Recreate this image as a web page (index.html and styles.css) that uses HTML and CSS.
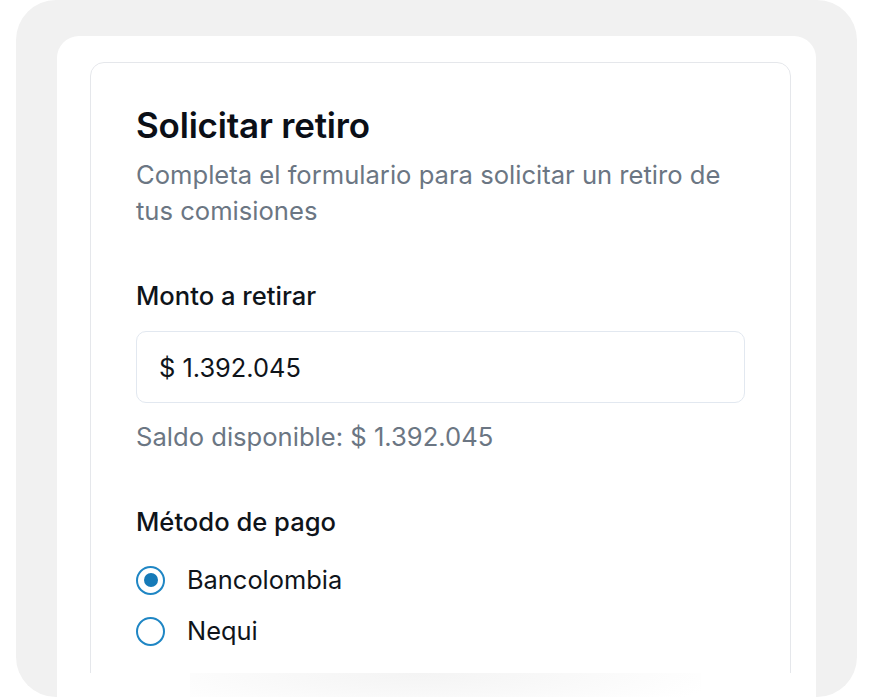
FILE: index.html
```html
<!DOCTYPE html>
<html lang="es">
<head>
<meta charset="utf-8">
<title>Solicitar retiro</title>
<link rel="stylesheet" href="styles.css">
</head>
<body>
<div class="frame">
  <div class="panel">
    <div class="viewport">
      <form class="card">
        <h1 class="title">Solicitar retiro</h1>
        <p class="subtitle">Completa el formulario para solicitar un retiro de tus comisiones</p>

        <label class="label" for="monto">Monto a retirar</label>
        <div class="input" id="monto">$ 1.392.045</div>
        <p class="hint">Saldo disponible: $ 1.392.045</p>

        <div class="label label-method">Método de pago</div>
        <div class="radios">
          <div class="radio-row">
            <span class="radio checked"></span>
            <span class="radio-text">Bancolombia</span>
          </div>
          <div class="radio-row">
            <span class="radio"></span>
            <span class="radio-text">Nequi</span>
          </div>
        </div>
      </form>
    </div>
    <div class="fade"></div>
  </div>
</div>
</body>
</html>
```

FILE: styles.css
```css
* { box-sizing: border-box; }
html, body { margin: 0; padding: 0; background: #ffffff; }
body { font-family: Inter, "Noto Sans", sans-serif; color: #0f1419; }

.frame {
  margin: 0 15px 0 16px;
  height: 697px;
  background: #f1f1f1;
  border-radius: 40px;
  padding: 36px 41px 0;
  overflow: hidden;
}

.panel {
  background: #ffffff;
  border-radius: 22px 22px 0 0;
  height: 100%;
  padding: 26px 25px 0 33px;
}

.viewport {
  height: 611px;
  overflow: hidden;
}

.card {
  border: 1px solid #e5e7eb;
  border-radius: 14px;
  padding: 40px 45px 60px;
  min-height: 700px;
  margin: 0;
}

.title {
  margin: 0;
  font-size: 35px;
  line-height: 44px;
  font-weight: 600;
  color: #0b0f17;
  letter-spacing: -0.2px;
}

.subtitle {
  margin: 10px 0 0;
  font-size: 25.6px;
  line-height: 36px;
  color: #6b7683;
}

.label {
  display: block;
  margin-top: 51px;
  font-size: 25.6px;
  line-height: 32px;
  font-weight: 500;
  color: #0f141a;
}

.input {
  margin-top: 19px;
  height: 72px;
  border: 1px solid #e2e8f0;
  border-radius: 10px;
  padding: 0 22px;
  display: flex;
  align-items: center;
  font-size: 25.4px;
  color: #0f141a;
}

.hint {
  margin: 18px 0 0;
  font-size: 25.6px;
  line-height: 32px;
  color: #6b7683;
}

.label-method { margin-top: 53px; }

.radios {
  margin-top: 26px;
  display: flex;
  flex-direction: column;
  gap: 19px;
}

.radio-row {
  display: flex;
  align-items: center;
  gap: 22px;
  height: 32px;
}

.radio {
  width: 29px;
  height: 29px;
  border-radius: 50%;
  border: 2px solid #1f86c4;
  display: flex;
  align-items: center;
  justify-content: center;
  flex: none;
}

.radio.checked::after {
  content: "";
  width: 14px;
  height: 14px;
  border-radius: 50%;
  background: #157ab8;
}

.radio-text {
  font-size: 25.4px;
  line-height: 32px;
  color: #0f141a;
}

.fade {
  height: 24px;
  margin: 0 90px 0 100px;
  background: radial-gradient(ellipse 60% 200% at 45% 0%, #f4f4f4 0%, #f8f8f8 40%, rgba(255,255,255,0) 100%);
}
```
